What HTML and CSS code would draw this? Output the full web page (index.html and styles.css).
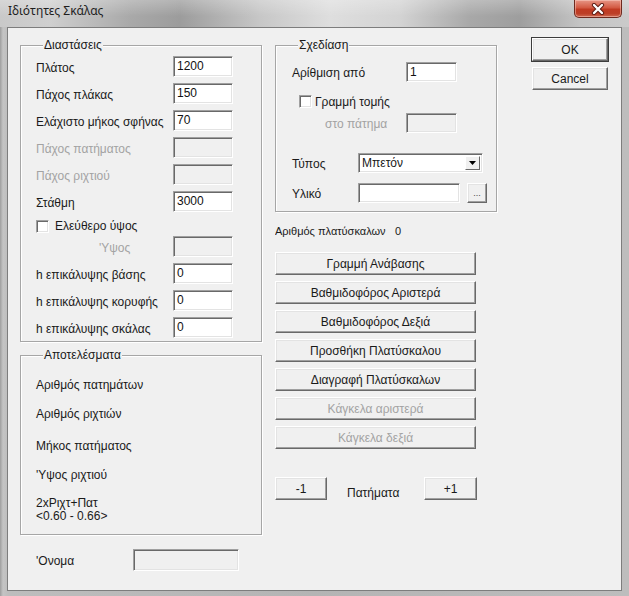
FILE: index.html
```html
<!DOCTYPE html>
<html lang="el">
<head>
<meta charset="utf-8">
<title>Ιδιότητες Σκάλας</title>
<link rel="stylesheet" href="styles.css">
</head>
<body>
<div class="window">
  <div class="titlebar">
    <span class="title">Ιδιότητες Σκάλας</span>
    <div class="close">
      <svg width="20" height="12" viewBox="0 0 20 12">
        <path d="M6 2 L14 10 M14 2 L6 10" stroke="#5a1a12" stroke-width="4.2" stroke-linecap="round"/>
        <path d="M6 2 L14 10 M14 2 L6 10" stroke="#ffffff" stroke-width="2.4" stroke-linecap="round"/>
      </svg>
    </div>
  </div>
  <div class="client">
    <div class="col-left">
      <div class="group dims">
        <div class="legend">Διαστάσεις</div>
        <div class="form-grid">
          <span class="lbl">Πλάτος</span><span class="edit">1200</span>
          <span class="lbl">Πάχος πλάκας</span><span class="edit">150</span>
          <span class="lbl">Ελάχιστο μήκος σφήνας</span><span class="edit">70</span>
          <span class="lbl dis">Πάχος πατήματος</span><span class="edit off"></span>
          <span class="lbl dis">Πάχος ριχτιού</span><span class="edit off"></span>
          <span class="lbl">Στάθμη</span><span class="edit">3000</span>
          <span class="check-row"><span class="check"></span><span class="lbl">Ελεύθερο ύψος</span></span>
          <span class="lbl dis indent">'Υψος</span><span class="edit off"></span>
          <span class="lbl">h επικάλυψης βάσης</span><span class="edit">0</span>
          <span class="lbl">h επικάλυψης κορυφής</span><span class="edit">0</span>
          <span class="lbl">h επικάλυψης σκάλας</span><span class="edit">0</span>
        </div>
      </div>
      <div class="group results">
        <div class="legend">Αποτελέσματα</div>
        <div class="result-list">
          <span class="item">Αριθμός πατημάτων</span>
          <span class="item">Αριθμός ριχτιών</span>
          <span class="item shift">Μήκος πατήματος</span>
          <span class="item">'Υψος ριχτιού</span>
          <span class="item two">2xΡιχτ+Πατ<br>&lt;0.60 - 0.66&gt;</span>
        </div>
      </div>
      <div class="name-row">
        <span class="lbl name-lbl">'Ονομα</span><span class="edit off name-edit"></span>
      </div>
    </div>

    <div class="col-mid">
      <div class="group design">
        <div class="legend">Σχεδίαση</div>
        <div class="d-row r1"><span class="lbl w114">Αρίθμιση από</span><span class="edit w51">1</span></div>
        <div class="d-row r2"><span class="check"></span><span class="lbl">Γραμμή τομής</span></div>
        <div class="d-row r3"><span class="lbl dis w114 pad33">στο πάτημα</span><span class="edit off w51"></span></div>
        <div class="d-row r4"><span class="lbl w66">Τύπος</span>
          <span class="combo"><span class="combo-text">Μπετόν</span><span class="combo-btn"><svg width="7" height="4" viewBox="0 0 7 4"><path d="M0 0 H7 L3.5 4 Z" fill="#000"/></svg></span></span>
        </div>
        <div class="d-row r5"><span class="lbl w66">Υλικό</span><span class="edit w102"></span><span class="btn dots">...</span></div>
      </div>
      <div class="count-row"><span class="lbl w120">Αριθμός πλατύσκαλων</span><span class="lbl">0</span></div>
      <div class="btn-list">
        <span class="btn wide">Γραμμή Ανάβασης</span>
        <span class="btn wide">Βαθμιδοφόρος Αριστερά</span>
        <span class="btn wide">Βαθμιδοφόρος Δεξιά</span>
        <span class="btn wide">Προσθήκη Πλατύσκαλου</span>
        <span class="btn wide">Διαγραφή Πλατύσκαλων</span>
        <span class="btn wide dis">Κάγκελα αριστερά</span>
        <span class="btn wide dis">Κάγκελα δεξιά</span>
      </div>
      <div class="step-row">
        <span class="btn step">-1</span>
        <span class="lbl step-lbl">Πατήματα</span>
        <span class="btn step plus">+1</span>
      </div>
    </div>

    <div class="col-right">
      <span class="btn default">OK</span>
      <span class="btn">Cancel</span>
    </div>
  </div>
</div>
</body>
</html>
```

FILE: styles.css
```css
* { box-sizing: border-box; }
html, body { margin: 0; padding: 0; background: #ffffff; }
body {
  font-family: "Liberation Sans", Arial, sans-serif;
  font-size: 12px;
  color: #1a1a1a;
}
.window {
  width: 629px;
  height: 596px;
  display: flex;
  flex-direction: column;
  background: linear-gradient(90deg, #9e9e9e 0px, #c4c4c4 3px, #bdbdbd 8px, #b4b4b4 50%, #bdbdbd 100%);
  overflow: hidden;
}
.titlebar {
  height: 27px;
  flex: none;
  display: flex;
  align-items: flex-start;
  background:
    linear-gradient(180deg, rgba(255,255,255,0.25), rgba(255,255,255,0) 60%),
    linear-gradient(90deg, #c9c9c9 0px, #cfcfcf 50px, #a9a9a9 130px, #9c9c9c 180px, #c7c7c7 260px, #dedede 330px, #d3d3d3 400px, #a8a8a8 470px, #9e9e9e 520px, #c4c4c4 580px, #cacaca 629px);
}
.title {
  font-family: "Noto Sans", "Open Sans", sans-serif;
  font-size: 12px;
  color: #1e1e1e;
  padding: 3px 0 0 8px;
  line-height: 16px;
}
.close {
  margin-left: auto;
  margin-right: 7px;
  width: 48px;
  height: 18px;
  border: 1px solid #6e2a1f;
  border-top: none;
  border-radius: 0 0 5px 5px;
  background: linear-gradient(180deg, #e79686 0%, #d35a43 45%, #c03a22 55%, #bd3f27 80%, #cf6a52 100%);
  box-shadow: inset 0 0 0 1px rgba(255,220,210,0.45);
  display: flex;
  align-items: center;
  justify-content: center;
}
.client {
  flex: 1;
  margin: 0 7px 5px 7px;
  border: 1px solid #7d7d7d;
  background: #f0f0f0;
  display: flex;
  padding-left: 12px;
}
.col-left { width: 242px; margin-top: 17px; display: flex; flex-direction: column; }
.col-mid { width: 222px; margin-left: 13px; margin-top: 17px; display: flex; flex-direction: column; }
.col-right { width: 76px; margin-left: 35px; margin-top: 10px; display: flex; flex-direction: column; gap: 6px; }

.group {
  border: 1px solid #a6a6a6;
  box-shadow: inset 1px 1px 0 #ffffff, 1px 1px 0 #ffffff;
}
.legend {
  margin-top: -8px;
  margin-left: 7px;
  padding: 0 1px;
  width: fit-content;
  height: 14px;
  line-height: 14px;
  background: #f0f0f0;
  color: #1a1a1a;
}
.design .legend { margin-left: 6px; }

.lbl { line-height: 14px; white-space: nowrap; }
.dis { color: #a3a3a3; }

.edit {
  display: inline-block;
  height: 21px;
  background: #ffffff;
  border-top: 1px solid #a0a0a0;
  border-left: 1px solid #a0a0a0;
  border-right: 1px solid #ffffff;
  border-bottom: 1px solid #ffffff;
  box-shadow: inset 1px 1px 0 #696969, inset -1px -1px 0 #e3e3e3;
  padding: 2px 0 0 3px;
  font-size: 12px;
  line-height: 14px;
  color: #111;
}
.edit.off { background: #f0f0f0; }

.dims { padding: 0 0 3px 15px; }
.form-grid {
  margin-top: 4px;
  display: grid;
  grid-template-columns: 137px 60px;
  row-gap: 6px;
  align-items: center;
}
.form-grid .lbl { padding-top: 2px; }
.form-grid .edit { width: 60px; }
.check-row {
  grid-column: 1 / -1;
  height: 12px;
  display: flex;
  align-items: center;
  gap: 6px;
}
.check {
  display: inline-block;
  width: 13px;
  height: 13px;
  flex: none;
  background: #ffffff;
  border-top: 1px solid #a0a0a0;
  border-left: 1px solid #a0a0a0;
  border-right: 1px solid #ffffff;
  border-bottom: 1px solid #ffffff;
  box-shadow: inset 1px 1px 0 #696969, inset -1px -1px 0 #e3e3e3;
}
.form-grid .check-row .check { margin-top: 4px; }
.form-grid .check-row .lbl { margin-top: 4px; padding-top: 0; }
.indent { padding-left: 63px; }

.results { margin-top: 13px; padding: 0 0 11px 15px; }
.result-list {
  padding-top: 16px;
  display: flex;
  flex-direction: column;
  gap: 15px;
}
.item { line-height: 14px; }
.item.shift { margin-top: 3px; }
.item.two { line-height: 13px; }

.name-row { margin-top: 14px; display: flex; align-items: center; padding-left: 16px; }
.name-lbl { width: 97px; padding-top: 2px; }
.name-edit { width: 106px; height: 22px; }

.design { padding: 0 0 8px 16px; }
.d-row { display: flex; align-items: center; }
.d-row > .lbl { padding-top: 2px; }
.r1 { margin-top: 10px; }
.r2 { margin-top: 13px; height: 13px; padding-left: 7px; gap: 3px; }
.r2 > .lbl { padding-top: 0; }
.r3 { margin-top: 5px; }
.r4 { margin-top: 20px; }
.r5 { margin-top: 10px; }
.w114 { width: 114px; }
.w66 { width: 66px; }
.w120 { width: 120px; flex: none; overflow: hidden; }
.pad33 { padding-left: 33px; }
.edit.w51 { width: 51px; height: 20px; }
.edit.w102 { width: 102px; height: 20px; }
.combo {
  width: 125px;
  height: 20px;
  display: flex;
  align-items: stretch;
  background: #ffffff;
  border-top: 1px solid #a0a0a0;
  border-left: 1px solid #a0a0a0;
  border-right: 1px solid #ffffff;
  border-bottom: 1px solid #ffffff;
  box-shadow: inset 1px 1px 0 #696969, inset -1px -1px 0 #e3e3e3;
  padding: 2px;
}
.combo-text { flex: 1; font-size: 12px; line-height: 14px; padding-left: 1px; }
.combo-btn {
  width: 15px;
  background: #f0f0f0;
  border-top: 1px solid #ffffff;
  border-left: 1px solid #ffffff;
  border-right: 1px solid #696969;
  border-bottom: 1px solid #696969;
  display: flex;
  align-items: center;
  justify-content: center;
}

.btn {
  display: flex;
  align-items: center;
  justify-content: center;
  height: 23px;
  background: #f0f0f0;
  border-top: 1px solid #ffffff;
  border-left: 1px solid #ffffff;
  border-right: 1px solid #696969;
  border-bottom: 1px solid #696969;
  box-shadow: inset -1px -1px 0 #a0a0a0, inset 1px 1px 0 #e3e3e3;
  font-size: 12px;
  color: #1a1a1a;
  white-space: nowrap;
}
.btn.dis { color: #a3a3a3; }
.btn.default { outline: 1px solid #3c3c3c; }
.btn.dots {
  width: 20px;
  height: 20px;
  margin-left: 7px;
  font-size: 9px;
  align-items: flex-end;
  padding-bottom: 4px;
  color: #444;
}
.count-row { margin-top: 12px; display: flex; font-size: 11px; }
.btn-list { margin-top: 14px; display: flex; flex-direction: column; gap: 6px; }
.btn.wide { width: 201px; }
.step-row { margin-top: 28px; display: flex; align-items: flex-start; }
.btn.step { width: 52px; }
.btn.plus { width: 53px; }
.step-lbl { margin-left: 20px; width: 77px; padding-top: 9px; }
```
